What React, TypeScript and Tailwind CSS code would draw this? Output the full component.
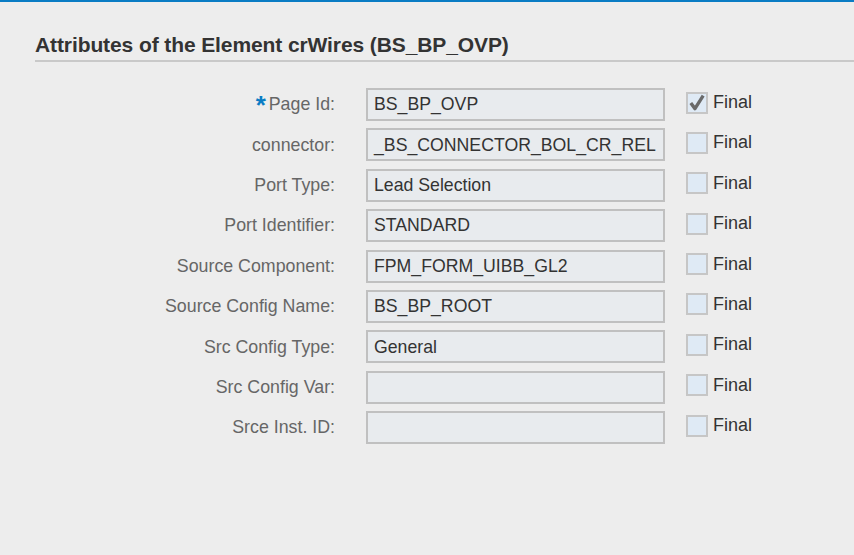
import React from 'react';

const rows: { label: string; value: string; required?: boolean; checked?: boolean }[] = [
  { label: 'Page Id:', value: 'BS_BP_OVP', required: true, checked: true },
  { label: 'connector:', value: '_BS_CONNECTOR_BOL_CR_REL' },
  { label: 'Port Type:', value: 'Lead Selection' },
  { label: 'Port Identifier:', value: 'STANDARD' },
  { label: 'Source Component:', value: 'FPM_FORM_UIBB_GL2' },
  { label: 'Source Config Name:', value: 'BS_BP_ROOT' },
  { label: 'Src Config Type:', value: 'General' },
  { label: 'Src Config Var:', value: '' },
  { label: 'Srce Inst. ID:', value: '' },
];

function FinalCheck({ checked }: { checked?: boolean }) {
  return (
    <div className="flex items-center gap-[5px]">
      <span className="flex h-[22px] w-[22px] items-center justify-center border-2 border-[#c6c6c6] bg-[#dfeaf5]">
        {checked && (
          <svg width="18" height="18" viewBox="0 0 16 16">
            <path d="M2.5 8 L6.2 13 L13.5 1.5" fill="none" stroke="#6a6a6a" strokeWidth="3" strokeLinejoin="round" />
          </svg>
        )}
      </span>
      <span className="text-[18px] text-[#333]">Final</span>
    </div>
  );
}

export default function App() {
  return (
    <div
      className="min-h-[555px] w-[854px] border-t-2 border-[#0a7cc4] bg-[#ededed]"
      style={{ fontFamily: '"Liberation Sans", Arial, sans-serif' }}
    >
      <div className="pl-[35px] pt-[31px]">
        <h2 className="border-b-2 border-[#c9c9c9] pb-[3px] text-[21px] font-bold leading-[24px] tracking-[-0.1px] text-[#333]">
          Attributes of the Element crWires (BS_BP_OVP)
        </h2>
      </div>
      <div className="mt-[26px] flex flex-col gap-[7.4px]">
        {rows.map((r) => (
          <div key={r.label} className="flex items-center">
            <div className="flex w-[335px] items-center justify-end text-[17.8px] text-[#666]">
              {r.required && <span className="mr-[3px] text-[26px] leading-[16px] font-bold text-[#0a7cc4]">*</span>}
              {r.label}
            </div>
            <div className="ml-[31px] flex h-[33px] w-[299px] items-center border-2 border-[#c0c0c0] bg-[#e8ebee] px-[6px] text-[17.7px] text-[#333] whitespace-nowrap overflow-hidden">
              {r.value}
            </div>
            <div className="ml-[21px] self-start mt-[1px]">
              <FinalCheck checked={r.checked} />
            </div>
          </div>
        ))}
      </div>
    </div>
  );
}
